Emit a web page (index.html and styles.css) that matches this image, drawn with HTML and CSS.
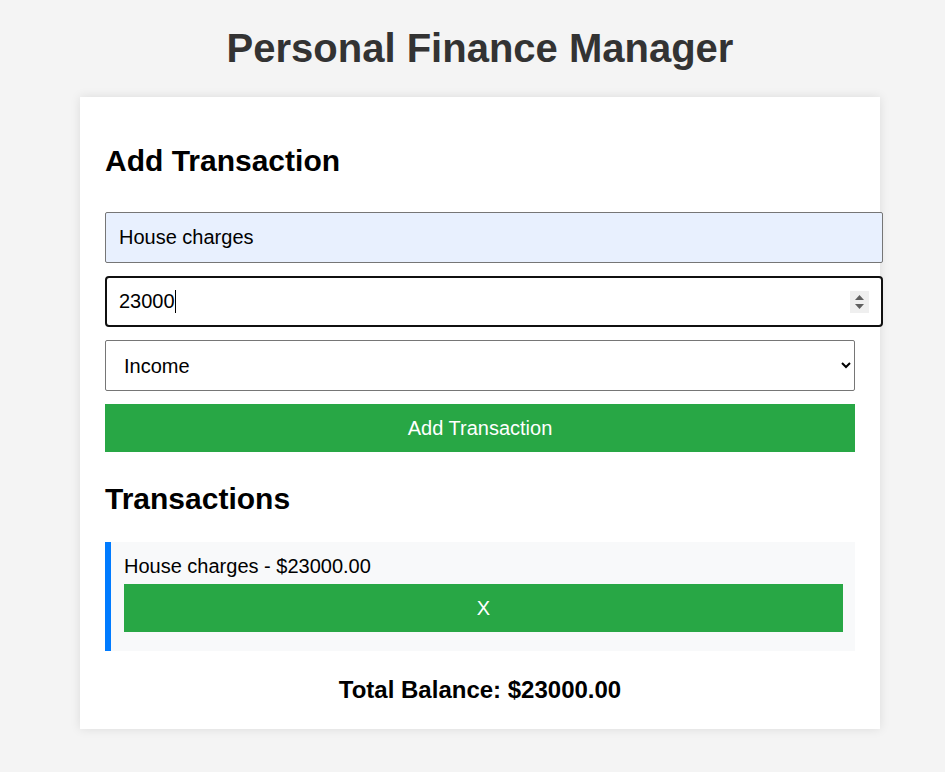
FILE: index.html
```html
<!DOCTYPE html>
<html lang="en">
<head>
<meta charset="utf-8">
<title>Personal Finance Manager</title>
<link rel="stylesheet" href="styles.css">
</head>
<body>
  <h1 class="page-title">Personal Finance Manager</h1>
  <main class="card">
    <h2 class="section-title form-title">Add Transaction</h2>
    <form class="tx-form">
      <input class="field field-autofill" type="text" value="House charges">
      <div class="number-wrap">
        <input class="field field-focus" type="number" value="23000">
        <span class="caret" aria-hidden="true"></span>
        <span class="spinner" aria-hidden="true">
          <svg width="19" height="22" viewBox="0 0 19 22">
            <path d="M5 9 L9.5 4 L14 9 Z" fill="#5f5f5f"/>
            <path d="M5 13 L9.5 18 L14 13 Z" fill="#5f5f5f"/>
          </svg>
        </span>
      </div>
      <select class="field-select">
        <option selected>Income</option>
        <option>Expense</option>
      </select>
      <button class="btn" type="button">Add Transaction</button>
    </form>

    <h2 class="section-title list-title">Transactions</h2>
    <ul class="tx-list">
      <li class="tx-item">
        <span class="tx-text">House charges - $23000.00</span>
        <button class="btn btn-remove" type="button">X</button>
      </li>
    </ul>

    <p class="balance">Total Balance: $23000.00</p>
  </main>
</body>
</html>
```

FILE: styles.css
```css
* {
  box-sizing: border-box;
}

body {
  margin: 0;
  padding: 0 0 40px 15px;
  background: #f4f4f4;
  font-family: "Liberation Sans", Arial, sans-serif;
  font-size: 20px;
  color: #000;
}

.page-title {
  margin: 26px 0 26px;
  text-align: center;
  font-size: 40px;
  line-height: 45px;
  font-weight: bold;
  color: #333;
}

.card {
  width: 800px;
  margin: 0 auto;
  padding: 25px 25px 26px;
  background: #fff;
  box-shadow: 0 0 10px rgba(0, 0, 0, 0.1);
}

.section-title {
  font-size: 30px;
  line-height: 34px;
  font-weight: bold;
}

.form-title {
  margin: 22px 0 34px;
}

.tx-form {
  display: flex;
  flex-direction: column;
  align-items: flex-start;
  gap: 13px;
  margin: 0;
}

.field {
  box-sizing: content-box;
  width: 750px;
  height: 23px;
  padding: 13px;
  margin: 0;
  border: 1px solid #767676;
  border-radius: 2px;
  font-family: inherit;
  font-size: 20px;
  color: #000;
  background: #fff;
  outline: none;
}

.field-autofill {
  background: #e8f0fe;
}

.number-wrap {
  position: relative;
}

.field-focus {
  padding: 12px;
  border: 2px solid #101010;
  border-radius: 4px;
  caret-color: transparent;
}

.field-focus::-webkit-inner-spin-button,
.field-focus::-webkit-outer-spin-button {
  -webkit-appearance: none;
  margin: 0;
}

.caret {
  position: absolute;
  top: 14px;
  left: 70px;
  width: 1px;
  height: 23px;
  background: #000;
}

.spinner {
  position: absolute;
  top: 15px;
  right: 14px;
  width: 19px;
  height: 22px;
  background: #efefef;
  display: block;
}

.spinner svg {
  display: block;
}

.field-select {
  width: 750px;
  height: 51px;
  padding: 0 14px;
  margin: 0;
  border: 1px solid #767676;
  border-radius: 2px;
  font-family: inherit;
  font-size: 20px;
  color: #000;
  background: #fff;
}

.btn {
  width: 750px;
  height: 48px;
  padding: 0;
  border: none;
  border-radius: 0;
  background: #28a745;
  color: #fff;
  font-family: inherit;
  font-size: 20px;
  cursor: pointer;
}

.list-title {
  margin: 30px 0 26px;
}

.tx-list {
  list-style: none;
  margin: 0;
  padding: 0;
}

.tx-item {
  display: flex;
  flex-direction: column;
  padding: 13px 12px 19px 13px;
  background: #f8f9fa;
  border-left: 6px solid #007bff;
}

.tx-text {
  line-height: 23px;
}

.btn-remove {
  width: 100%;
  margin-top: 6px;
}

.balance {
  margin: 26px 0 0;
  text-align: center;
  font-size: 24px;
  font-weight: bold;
  line-height: 26px;
}
```
